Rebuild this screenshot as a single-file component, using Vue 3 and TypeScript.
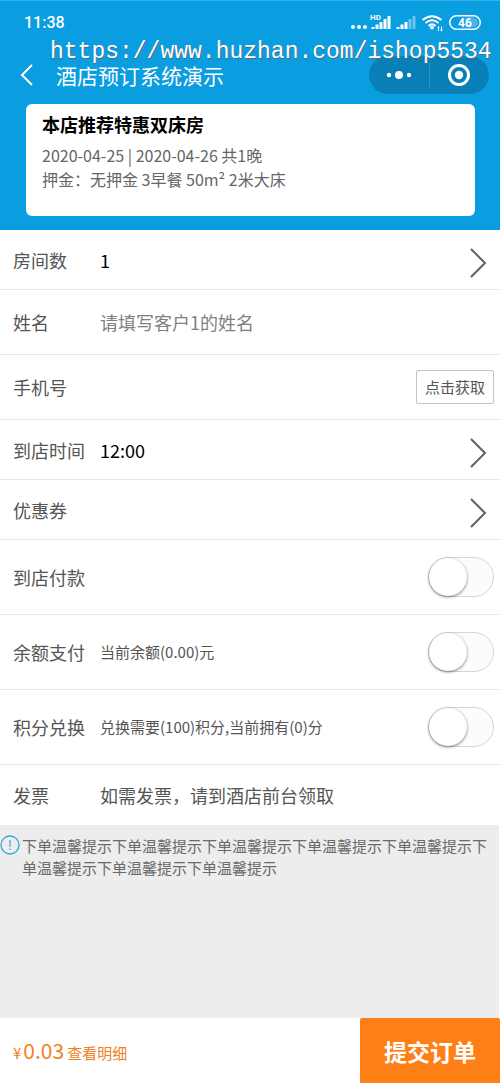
<script setup lang="ts">
import { ref } from 'vue'

const rooms = ref('1')
const arrival = ref('12:00')
const guest = ref('')
const phone = ref('')

const toggles = ref([
  { id: 'pay-at-hotel', label: '到店付款', hint: '', on: false },
  { id: 'balance', label: '余额支付', hint: '当前余额(0.00)元', on: false },
  { id: 'points', label: '积分兑换', hint: '兑换需要(100)积分,当前拥有(0)分', on: false },
])

const tip = '下单温馨提示'.repeat(8)
</script>

<template>
  <div class="page">
    <header class="top">
      <div class="status">
        <span class="clock">11:38</span>
        <svg class="status-icons" width="132" height="20" viewBox="0 0 132 20" aria-hidden="true">
          <g fill="#fff">
            <circle cx="3" cy="14" r="2" />
            <circle cx="9" cy="14" r="2" />
            <circle cx="15" cy="14" r="2" />
            <text x="20" y="7" class="hd">HD</text>
            <path d="M21.500 14h3v2h-3zM25.500 11.500h3v4.500h-3zM29.500 9h3v7h-3zM33.500 6h3v10h-3zM37.500 3h3v13h-3z" />
            <path d="M46.500 14h3v2h-3zM50.500 11.500h3v4.500h-3zM54.500 9h3v7h-3z" />
            <path d="M58.500 6h3v10h-3zM62.500 3h3v13h-3z" opacity="0.4" />
            <circle cx="82" cy="14.500" r="2" />
            <path d="M88.500 13l1.500 2h-1v3h-1v-3h-1zM91.500 18.500L90 16.500h1v-3h1v3h1z" />
          </g>
          <g fill="none" stroke="#fff" stroke-width="2">
            <path d="M72.500 7Q82 -0.500 91.500 7" />
            <path d="M75.500 10Q82 4.500 88.500 10" />
            <path d="M78.500 13Q82 9.500 85.500 13" />
          </g>
          <path d="M115 4.500h8a5 5 0 0 1 0 10h-8z" fill="#fff" opacity="0.25" />
          <rect x="99.750" y="2.750" width="30.500" height="13.500" rx="6.750" fill="none" stroke="#fff" stroke-width="1.500" />
          <text x="115" y="13.500" text-anchor="middle" fill="#fff" class="charge">46</text>
        </svg>
      </div>
      <nav class="nav">
        <button class="back" type="button" aria-label="返回">
          <svg width="14" height="22" viewBox="0 0 14 22"><path d="M12 1L2 11l10 10" fill="none" stroke="#fff" stroke-width="2" /></svg>
        </button>
        <h1 class="title">酒店预订系统演示</h1>
        <div class="capsule">
          <button type="button" aria-label="更多">
            <svg width="26" height="10" viewBox="0 0 26 10" fill="#fff"><circle cx="3" cy="5" r="2.200" /><circle cx="13" cy="5" r="4" /><circle cx="23" cy="5" r="2.200" /></svg>
          </button>
          <i class="divider"></i>
          <button type="button" aria-label="关闭">
            <svg width="24" height="24" viewBox="0 0 24 24"><circle cx="12" cy="12" r="9.500" fill="none" stroke="#fff" stroke-width="3" /><circle cx="12" cy="12" r="4.200" fill="#fff" /></svg>
          </button>
        </div>
      </nav>
      <div class="watermark">https://www.huzhan.com/ishop5534</div>
      <section class="card">
        <h2>本店推荐特惠双床房</h2>
        <p>2020-04-25 | 2020-04-26 共1晚</p>
        <p>押金：无押金 3早餐 50m² 2米大床</p>
      </section>
    </header>

    <form class="form" @submit.prevent>
      <div class="row">
        <label for="rooms">房间数</label>
        <select id="rooms" v-model="rooms">
          <option>1</option>
          <option>2</option>
          <option>3</option>
        </select>
        <svg class="chevron" width="18" height="30" viewBox="0 0 18 30"><path d="M2 1l14 14L2 29" /></svg>
      </div>
      <div class="row mid">
        <label for="guest">姓名</label>
        <input id="guest" v-model="guest" type="text" placeholder="请填写客户1的姓名" />
      </div>
      <div class="row mid">
        <label for="phone">手机号</label>
        <input id="phone" v-model="phone" type="tel" />
        <button class="fetch" type="button">点击获取</button>
      </div>
      <div class="row">
        <label for="arrival">到店时间</label>
        <select id="arrival" v-model="arrival">
          <option>12:00</option>
          <option>14:00</option>
          <option>18:00</option>
        </select>
        <svg class="chevron" width="18" height="30" viewBox="0 0 18 30"><path d="M2 1l14 14L2 29" /></svg>
      </div>
      <button class="row" type="button">
        <span class="name">优惠券</span>
        <span class="value"></span>
        <svg class="chevron" width="18" height="30" viewBox="0 0 18 30"><path d="M2 1l14 14L2 29" /></svg>
      </button>
      <div v-for="t in toggles" :key="t.id" class="row tall">
        <label :for="t.id">{{ t.label }}</label>
        <span class="value hint">{{ t.hint }}</span>
        <input :id="t.id" v-model="t.on" class="switch" type="checkbox" role="switch" />
      </div>
      <div class="row last">
        <span class="name">发票</span>
        <span class="value">如需发票，请到酒店前台领取</span>
      </div>
    </form>

    <section class="notice">
      <svg width="20" height="20" viewBox="0 0 20 20"><circle cx="10" cy="10" r="9" fill="none" stroke="#35a5d0" stroke-width="1.300" /><path d="M10 5v7M10 13.500v1.500" stroke="#35a5d0" stroke-width="1.200" /></svg>
      <p>{{ tip }}</p>
    </section>

    <footer class="bar">
      <div class="price">
        <span class="yen">¥</span><span class="amount">0.03</span>
        <a href="#detail">查看明细</a>
      </div>
      <button class="submit" type="button">提交订单</button>
    </footer>
  </div>
</template>

<style>
body {
  margin: 0;
  background: #fff;
}
</style>

<style scoped>
.page {
  display: flex;
  flex-direction: column;
  min-height: 100vh;
  color: #555;
  font-family: "Noto Sans CJK SC", sans-serif;
  font-size: 18px;
  line-height: 24px;
}
button,
input,
select {
  margin: 0;
  padding: 0;
  border: 0;
  background: none;
  color: inherit;
  font: inherit;
}
h1,
h2,
p {
  margin: 0;
}
.top {
  position: relative;
  box-sizing: border-box;
  padding-bottom: 14px;
  border-top: 1px solid #35b5ef;
  background: #0a9ddf;
  color: #fff;
}
.status {
  display: flex;
  align-items: center;
  justify-content: space-between;
  height: 44px;
  padding: 0 18px 0 24px;
}
.clock {
  font-family: Roboto, sans-serif;
  font-size: 16px;
  font-weight: 500;
}
.hd {
  font: bold 8px Roboto, sans-serif;
}
.charge {
  font: bold 12px Roboto, sans-serif;
}
.nav {
  display: flex;
  align-items: center;
  height: 59px;
  padding: 0 11px 0 20px;
}
.back {
  display: flex;
  width: 36px;
}
.title {
  flex: 1;
  font-size: 21px;
  font-weight: 400;
}
.capsule {
  display: flex;
  align-items: center;
  width: 120px;
  height: 38px;
  border-radius: 19px;
  background: #0880b7;
}
.capsule button {
  display: flex;
  flex: 1;
  justify-content: center;
}
.divider {
  width: 1px;
  height: 24px;
  background: #2a95c6;
}
.watermark {
  position: absolute;
  top: 39px;
  left: 50px;
  color: #fff;
  font-family: "Liberation Mono", monospace;
  font-size: 23px;
  line-height: 24px;
  text-shadow: 1px 1px 0 #4c6c80;
  white-space: nowrap;
  pointer-events: none;
}
.card {
  min-height: 96px;
  box-sizing: border-box;
  min-height: 112px;
  margin: 0 25px 0 26px;
  padding: 8px 16px;
  border-radius: 6px;
  background: #fff;
  color: #666;
  font-size: 16px;
}
.card h2 {
  margin-bottom: 7px;
  color: #000;
  font-size: 18px;
  font-weight: 700;
}
.form {
  display: flex;
  flex-direction: column;
}
.row {
  display: flex;
  align-items: center;
  box-sizing: border-box;
  min-height: 60px;
  padding: 0 6px 0 13px;
  border-bottom: 1px solid #e6e6e6;
  text-align: left;
}
.mid {
  min-height: 65px;
}
.tall {
  min-height: 75px;
}
.last {
  border-bottom: 0;
}
.row label,
.name {
  flex: none;
  width: 87px;
}
.row select,
.row input:not(.switch),
.value {
  flex: 1;
  min-width: 0;
}
.row select {
  appearance: none;
  color: #000;
}
.row input::placeholder {
  color: #808080;
  opacity: 1;
}
.row .hint {
  font-size: 15px;
}
.chevron {
  margin: 6px 7px 0 0;
  fill: none;
  stroke: #606060;
  stroke-width: 2;
}
.fetch {
  padding: 4px 8px;
  border: 1px solid #c4c4c4;
  border-radius: 2px;
  font-size: 15px;
}
.switch {
  display: flex;
  appearance: none;
  box-sizing: border-box;
  width: 66px;
  height: 40px;
  border: 1px solid #d2d6d6;
  border-radius: 20px;
  background: #fcfcfc;
}
.switch::before {
  width: 38px;
  height: 38px;
  border-radius: 50%;
  background: #fff;
  box-shadow: 0 1px 3px rgba(0, 0, 0, 0.5);
  content: "";
}
.switch:checked {
  justify-content: flex-end;
  background: #0a9ddf;
}
.notice {
  display: flex;
  flex: 1;
  align-items: flex-start;
  gap: 2px;
  margin: 0 1px 0 0;
  padding: 10px 0;
  background: #ededed;
  color: #6a6a6a;
}
.notice svg {
  flex: none;
}
.notice p {
  font-size: 15px;
  line-height: 22px;
}
.bar {
  display: flex;
  align-items: stretch;
  min-height: 65px;
}
.price {
  display: flex;
  flex: 1;
  align-items: baseline;
  padding: 20px 0 0 13px;
  color: #f0811f;
}
.yen {
  margin-right: 2px;
  font-size: 15px;
}
.amount {
  margin-right: 3px;
  font-size: 21px;
}
.price a {
  color: inherit;
  font-size: 15px;
  text-decoration: none;
}
.submit {
  width: 28%;
  border-radius: 2px 2px 0 0;
  background: #ff7f17;
  color: #fff;
  font-size: 23px;
  font-weight: 700;
}
</style>
